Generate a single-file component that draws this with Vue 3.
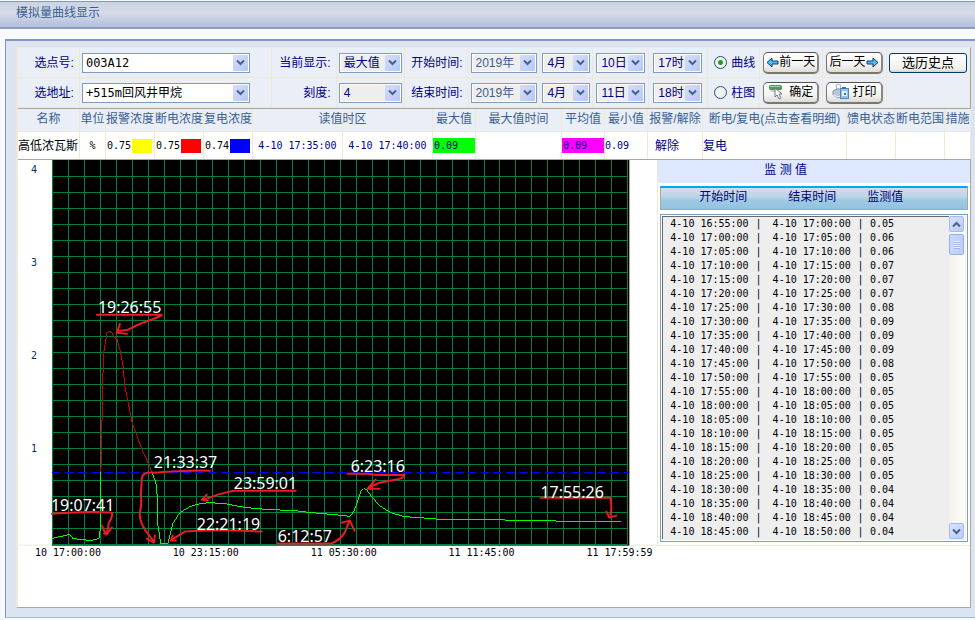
<script setup>
import { ref } from 'vue'

const columns = [
  { key: 'year', cls: 'dim' },
  { key: 'month', cls: '' },
  { key: 'day', cls: '' },
  { key: 'hour', cls: '' },
]
const startTime = { year: '2019年', month: '4月', day: '10日', hour: '17时' }
const endTime = { year: '2019年', month: '4月', day: '11日', hour: '18时' }
const mode = ref('curve')

const values = [
  '0.05', '0.06', '0.06', '0.07', '0.07', '0.07', '0.08', '0.09', '0.09', '0.09', '0.08', '0.05',
  '0.05', '0.05', '0.05', '0.05', '0.05', '0.05', '0.05', '0.04', '0.04', '0.04', '0.04',
]
const clock = (m) =>
  `4-10 ${String(Math.floor(m / 60)).padStart(2, '0')}:${String(m % 60).padStart(2, '0')}:00`
const readings = values.map((value, i) => {
  const from = 16 * 60 + 55 + i * 5
  return { from: clock(from), to: clock(from + 5), value }
})

let grid = ''
for (let x = 52; x <= 628; x += 16) grid += `M${x}.5 160V546`
for (let y = 176; y <= 544; y += 16) grid += `M52 ${y}.5H629`

const yLabels = [4, 3, 2, 1].map((text, i) => ({ text, y: 173 + i * 93 }))
const xLabels = ['10 17:00:00', '10 23:15:00', '11 05:30:00', '11 11:45:00', '11 17:59:59'].map(
  (text, i) => ({ text, x: 35 + i * 138 })
)

const notes = [
  { text: '19:26:55', x: 98, y: 313, line: 'M97 315H162C155 320 142 322 134 327S123 330 119 331', head: 'M120 324L117 333L127 334' },
  { text: '21:33:37', x: 154, y: 468, line: 'M210 471C190 470 170 472 154 473Q143 472 142 478L141 495Q142 505 140 513Q139 520 145 530L154 542', head: 'M147 539L154 543L155 536' },
  { text: '23:59:01', x: 234, y: 489, line: 'M296 491H234L218 495L204 500', head: 'M207 495L202 500L208 501' },
  { text: '19:07:41', x: 51, y: 511, line: 'M52 514C70 514 80 511 112 513Q113 517 109 523L107 533', head: 'M102 526L106 535L112 528M104 534H108' },
  { text: '22:21:19', x: 197, y: 530, line: 'M262 532C230 530 200 531 185 532L172 540', head: 'M173 536L171 541L176 541' },
  { text: '6:12:57', x: 278, y: 542, line: 'M278 544H331Q340 541 345 533L350 521', head: 'M342 523L350 521L355 531' },
  { text: '6:23:16', x: 351, y: 472, line: 'M348 474H368Q375 476 405 475Q404 479 395 480Q385 482 380 483L369 488', head: 'M376 480L368 489L380 489' },
  { text: '17:55:26', x: 541, y: 498, line: 'M541 498H611Q613 508 611 515', head: 'M607 512L610 518L617 516' },
]
</script>

<template>
  <main class="page">
    <h1 class="title">模拟量曲线显示</h1>
    <section class="frame">
      <div class="panel">
        <form class="controls" @submit.prevent>
          <div class="cell right"><label for="point">选点号:</label></div>
          <div class="cell">
            <span class="pick big"><select id="point"><option>003A12</option></select><i class="arrow"><svg viewBox="0 0 9 7"><path d="M1 1.5L4.5 5L8 1.5" /></svg></i></span>
          </div>
          <div class="cell right"><label for="show">当前显示:</label></div>
          <div class="cell">
            <span class="pick"><select id="show"><option>最大值</option></select><i class="arrow"><svg viewBox="0 0 9 7"><path d="M1 1.5L4.5 5L8 1.5" /></svg></i></span>
          </div>
          <div class="cell right"><label for="start-year">开始时间:</label></div>
          <div v-for="c in columns" :key="c.key" class="cell" :class="c.key">
            <span class="pick" :class="c.cls"><select :id="'start-' + c.key" :aria-label="'开始时间 ' + c.key"><option>{{ startTime[c.key] }}</option></select><i class="arrow"><svg viewBox="0 0 9 7"><path d="M1 1.5L4.5 5L8 1.5" /></svg></i></span>
          </div>
          <div class="cell mode">
            <input id="curve" v-model="mode" type="radio" name="mode" value="curve" /><label for="curve">曲线</label>
          </div>
          <div class="cell">
            <span class="plate"><button type="button" class="soft">
              <svg class="way" viewBox="0 0 13 11"><path d="M1 5.5L6 1V4H12V7H6V10Z" /></svg>前一天</button></span>
          </div>
          <div class="cell">
            <span class="plate"><button type="button" class="soft">后一天<svg class="way" viewBox="0 0 13 11"><path d="M12 5.5L7 1V4H1V7H7V10Z" /></svg></button></span>
          </div>
          <div class="cell"><button type="button" class="history">选历史点</button></div>

          <div class="cell right"><label for="address">选地址:</label></div>
          <div class="cell">
            <span class="pick big"><select id="address"><option>+515m回风井甲烷</option></select><i class="arrow"><svg viewBox="0 0 9 7"><path d="M1 1.5L4.5 5L8 1.5" /></svg></i></span>
          </div>
          <div class="cell right"><label for="scale">刻度:</label></div>
          <div class="cell">
            <span class="pick"><select id="scale"><option>4</option></select><i class="arrow"><svg viewBox="0 0 9 7"><path d="M1 1.5L4.5 5L8 1.5" /></svg></i></span>
          </div>
          <div class="cell right"><label for="end-year">结束时间:</label></div>
          <div v-for="c in columns" :key="c.key" class="cell" :class="c.key">
            <span class="pick" :class="c.cls"><select :id="'end-' + c.key" :aria-label="'结束时间 ' + c.key"><option>{{ endTime[c.key] }}</option></select><i class="arrow"><svg viewBox="0 0 9 7"><path d="M1 1.5L4.5 5L8 1.5" /></svg></i></span>
          </div>
          <div class="cell mode">
            <input id="bars" v-model="mode" type="radio" name="mode" value="bars" /><label for="bars">柱图</label>
          </div>
          <div class="cell">
            <span class="plate"><button type="submit" class="soft wide">
              <svg class="pic" viewBox="0 0 17 16">
                <path d="M1 2Q1 1 3 1H12Q14 1 14 3V5Q14 6 12 6H3Q1 6 1 4Z" fill="#4f9a5b" />
                <path d="M2 2H12V3H2Z" fill="#a5d3a4" />
                <path d="M2 6H7V8H4Z" fill="#c8cfc8" />
                <path d="M7 4V13L9 11L11 15L13 14L11 10H14Z" fill="#fff" stroke="#68768c" />
              </svg>确定</button></span>
          </div>
          <div class="cell">
            <span class="plate"><button type="button" class="soft wide">
              <svg class="pic" viewBox="0 0 17 16">
                <path d="M4 1L8 0L9 6H5Z" fill="#fff" stroke="#9eb4cb" />
                <path d="M1 7L5 5H11V12L6 14L1 11Z" fill="#b9c6d6" stroke="#7f93aa" />
                <path d="M1 11L6 13L11 11" fill="none" stroke="#eef4fa" />
                <rect x="8.5" y="4.5" width="8" height="10" fill="#8fc4ee" stroke="#4c86bd" />
                <rect x="10" y="3" width="4" height="2" fill="#3f70a8" />
                <rect x="10" y="7" width="5" height="5" fill="#e6f4ff" />
                <rect x="12" y="9" width="2" height="2" fill="#3b79b5" />
              </svg>打印</button></span>
          </div>
          <div class="cell"></div>
        </form>

        <table class="summary">
          <colgroup><col v-for="n in 16" :key="n" /></colgroup>
          <thead>
            <tr>
              <th>名称</th><th>单位</th><th>报警浓度</th><th>断电浓度</th><th>复电浓度</th>
              <th colspan="2">读值时区</th><th>最大值</th><th>最大值时间</th><th>平均值</th>
              <th>最小值</th><th>报警/解除</th><th>断电/复电(点击查看明细)</th><th>馈电状态</th>
              <th>断电范围</th><th>措施</th>
            </tr>
          </thead>
          <tbody>
            <tr>
              <td class="ink">高低浓瓦斯</td>
              <td class="ink num mid">%</td>
              <td class="ink num"><span class="level">0.75<i class="yellow"></i></span></td>
              <td class="ink num"><span class="level">0.75<i class="red"></i></span></td>
              <td class="ink num"><span class="level">0.74<i class="blue"></i></span></td>
              <td class="num mid">4-10 17:35:00</td>
              <td class="num mid">4-10 17:40:00</td>
              <td class="num"><span class="mark green">0.09</span></td>
              <td></td>
              <td class="num"><span class="mark pink">0.09</span></td>
              <td class="num">0.09</td>
              <td class="pad">解除</td>
              <td>复电</td>
              <td></td><td></td><td></td>
            </tr>
          </tbody>
        </table>

        <div class="body">
          <svg class="chart" viewBox="18 160 640 400" role="img" aria-label="模拟量曲线">
            <rect x="18" y="545" width="640" height="1" fill="#ece9d8" />
            <rect x="52" y="160" width="578" height="386" fill="#000" />
            <path :d="grid" class="grid" />
            <path d="M52 472.5H629" class="limit" />
            <path class="trace low" d="M52 539L60 537L65 536L69 535L72 537L73 539L84 540L90 541L96 540L100 538L101 472" />
            <path class="trace high" d="M101 472L102 425L103 375L104 352L106 340L107 333L109 331L112 333L115 338L117 339L120 350L123 365L125 387L132 422L141 447L152 472" />
            <path class="trace low" d="M152 472L156 483L158 502L158 525L160 538L161 544H168L171 532L173 524L180 513L190 507L200 504L210 503L225 504L240 507L256 509L272 510L295 511L312 513L335 515L345 516L350 517L354 512L358 502L361 492L364 489L367 490L372 497L380 506L391 513L405 517L420 518L443 520H498L518 521H555L560 522H622" />
            <g v-for="n in notes" :key="n.text">
              <path :d="n.line" class="pen" />
              <path :d="n.head" class="pen" />
              <text :x="n.x" :y="n.y" class="note">{{ n.text }}</text>
            </g>
            <text v-for="l in yLabels" :key="l.text" x="31" :y="l.y" class="tick side">{{ l.text }}</text>
            <text v-for="l in xLabels" :key="l.text" :x="l.x" y="556" class="tick">{{ l.text }}</text>
          </svg>

          <aside class="side-panel">
            <h2 class="caption">监 测 值</h2>
            <div class="heads"><span>开始时间</span><span>结束时间</span><span>监测值</span></div>
            <div class="listbox">
              <table class="list" aria-label="监测值">
                <tbody>
                  <tr v-for="r in readings" :key="r.from">
                    <td>{{ r.from }}</td><td class="bar">|</td><td>{{ r.to }}</td><td class="bar">|</td><td>{{ r.value }}</td>
                  </tr>
                </tbody>
              </table>
              <div class="scroll">
                <button type="button" class="step" aria-label="向上"><svg viewBox="0 0 9 7"><path d="M1 5.5L4.5 2L8 5.5" /></svg></button>
                <span class="thumb"></span>
                <button type="button" class="step last" aria-label="向下"><svg viewBox="0 0 9 7"><path d="M1 1.5L4.5 5L8 1.5" /></svg></button>
              </div>
            </div>
          </aside>
        </div>
      </div>
    </section>
  </main>
</template>

<style>
body {
  background: #f7f9fd;
}
</style>

<style scoped>
* {
  box-sizing: border-box;
}
.page {
  font: 12px/16px "Liberation Sans", "Noto Sans CJK SC", sans-serif;
  color: #000080;
  padding-top: 1px;
}
.title {
  margin: 0;
  height: 28px;
  padding: 2px 16px;
  font-size: 12px;
  font-weight: 400;
  line-height: 18px;
  color: #3a5f92;
  border-top: 1px solid #7f9db9;
  border-bottom: 2px solid #8c9cc2;
  background: linear-gradient(#cbd3e2, #d5dbe8 45%, #b3bddb);
}
.frame {
  margin: 10px 0 2px 5px;
  padding: 6px 4px 9px 10px;
  border: 1px solid #7f94bd;
  border-top: 2px solid #8196c0;
  border-right: 0;
  border-bottom-color: #a9b8d3;
  background: #dde4f1;
}
.panel {
  padding-bottom: 47px;
  background: #fff;
  border: 1px solid #ece9d8;
  border-left-width: 2px;
  border-right-color: #aca899;
  border-bottom-color: #aca899;
}
.controls {
  display: grid;
  grid-template-columns:
    minmax(0, 62fr) minmax(0, 192fr) minmax(0, 65fr) minmax(0, 68fr) minmax(0, 64fr)
    minmax(0, 72fr) minmax(0, 53fr) minmax(0, 56fr) minmax(0, 59fr) minmax(0, 52fr)
    minmax(0, 63fr) minmax(0, 64fr) minmax(0, 83fr);
  grid-auto-rows: 30px;
  background: #e9eef7;
  border-bottom: 1px solid #aca899;
}
.cell {
  display: flex;
  align-items: center;
  padding: 0 2px;
  white-space: nowrap;
  border-right: 1px solid #ece9d8;
  border-bottom: 1px solid #ece9d8;
}
.cell.right {
  justify-content: flex-end;
  padding-right: 5px;
}
.cell.day {
  padding: 0 3px;
}
.cell.hour {
  padding: 0 5px 0 4px;
}
.cell.mode {
  gap: 4px;
  padding-left: 6px;
}
.pick {
  position: relative;
  display: block;
  flex: 1;
  min-width: 0;
  height: 20px;
  border: 1px solid #7f9db9;
  background: #fff;
}
.pick.big {
  flex: 0 1 168px;
}
.pick select {
  display: block;
  width: 100%;
  height: 18px;
  padding: 0 16px 0 3px;
  border: 1px solid #fff;
  border-radius: 0;
  appearance: none;
  background: #eee;
  color: #000080;
  font: 12px/16px "Liberation Sans", "Noto Sans CJK SC", sans-serif;
}
.pick.big select {
  padding-left: 2px;
  background: #fff;
  color: #000;
  font: 12px/16px "DejaVu Sans Mono", "Noto Sans CJK SC", monospace;
}
.pick.dim select {
  color: #3f5f92;
}
.arrow {
  position: absolute;
  top: 1px;
  right: 1px;
  display: flex;
  align-items: center;
  justify-content: center;
  width: 15px;
  height: 16px;
  border-radius: 1px;
  background: linear-gradient(135deg, #d3defc, #b5c8f7);
  pointer-events: none;
}
.arrow svg,
.step svg {
  width: 9px;
  height: 7px;
  fill: none;
  stroke: #4d6185;
  stroke-width: 2;
}
input[type="radio"] {
  appearance: none;
  width: 13px;
  height: 13px;
  margin: 0;
  border: 1px solid #1c5180;
  border-radius: 50%;
  background: #f1f1ee;
}
input[type="radio"]:checked {
  background: radial-gradient(circle, #21a121 0 2px, #f3f3f0 3px);
}
.plate {
  display: flex;
  flex: 1;
  height: 24px;
  padding: 1px;
  background: #eceae8;
}
button {
  cursor: pointer;
  color: #000;
  font: 12px/16px "Liberation Sans", "Noto Sans CJK SC", sans-serif;
}
.soft {
  display: flex;
  flex: 1;
  align-items: center;
  justify-content: center;
  padding: 0;
  white-space: nowrap;
  border: 1px solid #555;
  border-width: 1px 2px 2px 1px;
  border-color: #555 #888 #777 #777;
  border-radius: 5px;
  background: linear-gradient(#fff, #f4f4f2 60%, #dddcd8);
}
.soft.wide {
  gap: 4px;
}
.way {
  width: 13px;
  height: 11px;
  fill: #49c0f5;
  stroke: #123c66;
}
.pic {
  width: 17px;
  height: 16px;
}
.history {
  width: 100%;
  height: 20px;
  padding: 0;
  font-size: 13px;
  border: 1px solid #003c74;
  border-radius: 3px;
  background: linear-gradient(#fff, #f0f0ea 85%, #d8d0c4);
}
.summary {
  width: 100%;
  table-layout: fixed;
  border-collapse: separate;
  border-spacing: 0;
  border-bottom: 1px solid #aca899;
}
.summary col { width: 49px; }
.summary col:nth-child(1) { width: 62px; }
.summary col:nth-child(2), .summary col:nth-child(16) { width: 26px; }
.summary col:nth-child(6), .summary col:nth-child(7) { width: 90px; }
.summary col:nth-child(8), .summary col:nth-child(10), .summary col:nth-child(11) { width: 43px; }
.summary col:nth-child(9) { width: 86px; }
.summary col:nth-child(12) { width: 55px; }
.summary col:nth-child(13) { width: 144px; }
.summary th,
.summary td {
  padding: 0;
  font-weight: 400;
  white-space: nowrap;
  border-right: 1px solid #ece9d8;
}
.summary th {
  height: 23px;
  padding-bottom: 2px;
  color: #3a5f92;
  background: #e9eef7;
  border-bottom: 1px solid #ece9d8;
}
.summary td {
  height: 27px;
}
.summary .ink {
  color: #000;
}
.summary .num {
  font: 10px/15px "DejaVu Sans Mono", monospace;
}
.summary .mid {
  text-align: center;
}
.summary .pad {
  padding-left: 7px;
}
.level {
  display: flex;
  align-items: center;
  justify-content: flex-end;
  gap: 1px;
  padding-right: 2px;
}
.level i {
  width: 20px;
  height: 14px;
}
.yellow { background: #ff0; }
.red { background: #f00; }
.blue { background: #00f; }
.mark {
  display: block;
  padding-left: 1px;
}
.green { background: #0f0; }
.pink { background: #f0f; }
.body {
  display: grid;
  grid-template-columns: minmax(0, 640fr) minmax(0, 313fr);
  align-items: start;
}
.chart {
  display: block;
  width: 100%;
}
.grid {
  fill: none;
  stroke: #008040;
  shape-rendering: crispEdges;
}
.limit {
  stroke: #00f;
  stroke-dasharray: 9 4;
  shape-rendering: crispEdges;
}
.trace {
  fill: none;
  shape-rendering: crispEdges;
}
.low { stroke: #0f0; }
.high { stroke: #d00000; }
.pen {
  fill: none;
  stroke: #ed1c24;
  stroke-width: 2;
  stroke-linecap: round;
  stroke-linejoin: round;
}
.note {
  fill: #fff;
  font: 16px "Noto Sans", sans-serif;
}
.tick {
  fill: #000;
  font: 10px "DejaVu Sans Mono", monospace;
}
.side {
  fill: #003366;
}
.side-panel {
  padding-bottom: 3px;
  border-left: 1px solid #ece9d8;
  border-bottom: 1px solid #ece9d8;
}
.caption {
  margin: 0 0 3px;
  padding-right: 57px;
  height: 23px;
  font-size: 12px;
  font-weight: 400;
  line-height: 20px;
  text-align: center;
  white-space: pre;
  background: #dee8ff;
}
.heads {
  display: grid;
  grid-template-columns: 89px 79px 1fr;
  height: 24px;
  margin: 0 2px;
  padding-left: 38px;
  line-height: 19px;
  border: 1px solid #aca899;
  border-top: 2px solid #00a8ee;
  background: linear-gradient(#d6dbe9, #bdd5e8 40%, #9dc9e2 60%, #93c2e0);
}
.listbox {
  display: flex;
  justify-content: space-between;
  height: 328px;
  margin: 4px 2px 0;
  padding: 1px 2px 2px 1px;
  border: 1px solid #7f9db9;
  background: #eee;
  box-shadow: inset 0 0 0 1px #fff;
}
.list {
  flex: 1;
  align-self: stretch;
  display: block;
  border-top: 1px solid #696969;
  border-left: 1px solid #696969;
  border-spacing: 0;
  padding-left: 7px;
  color: #000;
  font: 10px/14px "DejaVu Sans Mono", monospace;
}
.list td {
  height: 14px;
  padding: 0;
  white-space: nowrap;
}
.list .bar {
  width: 24px;
  padding-right: 4px;
  text-align: center;
}
.list .bar:nth-child(4) {
  width: 19px;
  padding-right: 0;
}
.scroll {
  display: flex;
  flex-direction: column;
  gap: 2px;
  width: 16px;
  background: linear-gradient(90deg, #f3f1ec, #fefefb);
}
.step {
  display: flex;
  align-items: center;
  justify-content: center;
  width: 15px;
  height: 16px;
  padding: 0;
  border: 1px solid #a6baf0;
  border-radius: 2px;
  background: linear-gradient(135deg, #d9e3fd, #b7caf8);
}
.step.last {
  margin-top: auto;
}
.thumb {
  width: 15px;
  height: 21px;
  border: 1px solid #98b1e4;
  border-radius: 2px;
  background:
    repeating-linear-gradient(#eef4fe 0 1px, #9db4ea 1px 2px) center / 6px 8px no-repeat,
    linear-gradient(90deg, #c9d8fc, #bacdfb);
}
</style>
